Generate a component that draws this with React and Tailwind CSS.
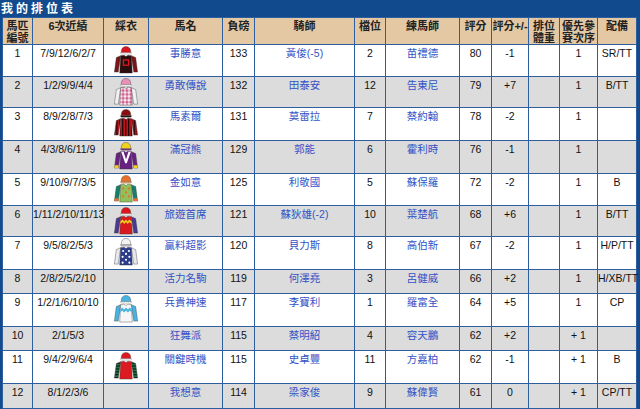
import React from 'react';

const rows = [
  { no: '1', form: '7/9/12/6/2/7', silk: 1, horse: '事勝意', wt: '133', jockey: '黃俊(-5)', draw: '2', trainer: '苗禮德', rating: '80', diff: '-1', prio: '1', gear: 'SR/TT', h: 'h-[32px]' },
  { no: '2', form: '1/2/9/9/4/4', silk: 2, horse: '勇敢傳說', wt: '132', jockey: '田泰安', draw: '12', trainer: '告東尼', rating: '79', diff: '+7', prio: '1', gear: 'B/TT', h: 'h-[31px]' },
  { no: '3', form: '8/9/2/8/7/3', silk: 3, horse: '馬素爾', wt: '131', jockey: '莫雷拉', draw: '7', trainer: '蔡約翰', rating: '78', diff: '-2', prio: '1', gear: '', h: 'h-[33px]' },
  { no: '4', form: '4/3/8/6/11/9', silk: 4, horse: '滿冠熊', wt: '129', jockey: '郭能', draw: '6', trainer: '霍利時', rating: '76', diff: '-1', prio: '1', gear: '', h: 'h-[33px]' },
  { no: '5', form: '9/10/9/7/3/5', silk: 5, horse: '金如意', wt: '125', jockey: '利敬國', draw: '5', trainer: '蘇保羅', rating: '72', diff: '-2', prio: '1', gear: 'B', h: 'h-[32px]' },
  { no: '6', form: '1/11/2/10/11/13', silk: 6, horse: '旅遊首席', wt: '121', jockey: '蘇狄雄(-2)', draw: '10', trainer: '葉楚航', rating: '68', diff: '+6', prio: '1', gear: 'B/TT', h: 'h-[31px]' },
  { no: '7', form: '9/5/8/2/5/3', silk: 7, horse: '贏料超影', wt: '120', jockey: '貝力斯', draw: '8', trainer: '高伯新', rating: '67', diff: '-2', prio: '1', gear: 'H/P/TT', h: 'h-[33px]' },
  { no: '8', form: '2/8/2/5/2/10', silk: 0, horse: '活力名駒', wt: '119', jockey: '何澤堯', draw: '3', trainer: '呂健威', rating: '66', diff: '+2', prio: '1', gear: 'H/XB/TT', h: 'h-[24px]' },
  { no: '9', form: '1/2/1/6/10/10', silk: 9, horse: '兵貴神速', wt: '117', jockey: '李寶利', draw: '1', trainer: '羅富全', rating: '64', diff: '+5', prio: '1', gear: 'CP', h: 'h-[33px]' },
  { no: '10', form: '2/1/5/3', silk: 0, horse: '狂舞派', wt: '115', jockey: '蔡明紹', draw: '4', trainer: '容天鵬', rating: '62', diff: '+2', prio: '+ 1', gear: '', h: 'h-[24px]' },
  { no: '11', form: '9/4/2/9/6/4', silk: 11, horse: '關鍵時機', wt: '115', jockey: '史卓豐', draw: '11', trainer: '方嘉柏', rating: '62', diff: '-1', prio: '+ 1', gear: 'B', h: 'h-[33px]' },
  { no: '12', form: '8/1/2/3/6', silk: 0, horse: '我想意', wt: '114', jockey: '梁家俊', draw: '9', trainer: '蘇偉賢', rating: '61', diff: '0', prio: '+ 1', gear: 'CP/TT', h: 'h-[25px]' },
];

const silks = {
  1: { cap: '#d9141c', capPeak: '#ffffff', body: '#2a0d0d', sleeve: '#7a1518', extra: 'square' },
  2: { cap: '#e890b8', capPeak: '#ffffff', body: 'url(#diaPink)', sleeve: '#f4f0f2', extra: '' },
  3: { cap: '#8a1010', capPeak: '#1a0505', body: 'url(#stripeRed)', sleeve: 'url(#stripeRed)', extra: '' },
  4: { cap: '#f2d21a', capPeak: '#7a2a8a', body: '#6a2282', sleeve: '#6a2282', cuff: '#f2d21a', extra: 'v' },
  5: { cap: '#e8702a', capPeak: '#f2a060', body: '#8fc05a', sleeve: '#17806a', cuff: '#e8702a', extra: 'dots' },
  6: { cap: '#e0151c', capPeak: '#ffffff', body: '#d81a20', sleeve: '#4a3a92', extra: 'zig' },
  7: { cap: '#f2f2f2', capPeak: '#c0c0c0', body: '#2c3c8c', sleeve: '#e8e8ee', extra: 'spots' },
  9: { cap: '#48b4e4', capPeak: '#ffffff', body: '#f6f6f6', sleeve: '#48b4e4', extra: 'band' },
  11: { cap: '#dc1a22', capPeak: '#ffffff', body: '#dc1a22', sleeve: 'url(#hoopGreen)', extra: '' },
};

function Silk({ id }) {
  const s = silks[id];
  if (!s) return null;
  return (
    <svg width="26" height="30" viewBox="0 0 26 31" className="mx-auto block">
      <defs>
        <pattern id="diaPink" width="4" height="4" patternUnits="userSpaceOnUse">
          <rect width="4" height="4" fill="#f6eef2" />
          <path d="M2 0 L4 2 L2 4 L0 2 Z" fill="#d0608e" />
        </pattern>
        <pattern id="stripeRed" width="3" height="4" patternUnits="userSpaceOnUse">
          <rect width="3" height="4" fill="#c8141c" />
          <rect width="1.3" height="4" fill="#1a0505" />
        </pattern>
        <pattern id="hoopGreen" width="4" height="3" patternUnits="userSpaceOnUse">
          <rect width="4" height="3" fill="#1f7a4a" />
          <rect width="4" height="1.2" fill="#111" />
        </pattern>
      </defs>
      {/* cap */}
      <path d="M8 8 Q8 1.5 13 1.5 Q18 1.5 18 8 Z" fill={s.cap} stroke="#333" strokeWidth="0.4" />
      <path d="M7 8 L19 8 L18 9.5 L8 9.5 Z" fill={s.capPeak} stroke="#666" strokeWidth="0.3" />
      {/* sleeves */}
      <path d="M7.5 11 L3 13 L1 28 L5 28 L6.5 18 Z" fill={s.sleeve} stroke="#333" strokeWidth="0.4" />
      <path d="M18.5 11 L23 13 L25 28 L21 28 L19.5 18 Z" fill={s.sleeve} stroke="#333" strokeWidth="0.4" />
      {s.cuff && (
        <>
          <path d="M1.3 25 L5.3 25 L5 28 L1 28 Z" fill={s.cuff} />
          <path d="M20.7 25 L24.7 25 L25 28 L21 28 Z" fill={s.cuff} />
        </>
      )}
      {/* body */}
      <path d="M7.5 11 L11 10.5 L13 12 L15 10.5 L18.5 11 L19.5 29 L6.5 29 Z" fill={s.body} stroke="#333" strokeWidth="0.4" />
      {s.extra === 'square' && <rect x="10.3" y="15.5" width="5.4" height="5.4" fill="#2a0d0d" stroke="#e01820" strokeWidth="1.3" />}
      {s.extra === 'v' && <path d="M8 11 L10.5 11 L13 19 L15.5 11 L18 11 L13.8 23 L12.2 23 Z" fill="#ffffff" />}
      {s.extra === 'dots' && (
        <g fill="#e8702a">
          <rect x="9" y="14" width="2" height="2" transform="rotate(45 10 15)" />
          <rect x="15" y="14" width="2" height="2" transform="rotate(45 16 15)" />
          <rect x="12" y="18" width="2" height="2" transform="rotate(45 13 19)" />
          <rect x="9" y="22" width="2" height="2" transform="rotate(45 10 23)" />
          <rect x="15" y="22" width="2" height="2" transform="rotate(45 16 23)" />
        </g>
      )}
      {s.extra === 'zig' && <path d="M7.2 16 L9.5 14 L11.3 16 L13 14 L14.7 16 L16.5 14 L18.8 16 L18.9 18.5 L16.5 16.5 L14.7 18.5 L13 16.5 L11.3 18.5 L9.5 16.5 L7.1 18.5 Z" fill="#f2d21a" />}
      {s.extra === 'spots' && (
        <g fill="#ffffff">
          <circle cx="10" cy="14.5" r="1.1" />
          <circle cx="16" cy="14.5" r="1.1" />
          <circle cx="13" cy="17.5" r="1.1" />
          <circle cx="9.5" cy="20.5" r="1.1" />
          <circle cx="16.5" cy="20.5" r="1.1" />
          <circle cx="13" cy="23.5" r="1.1" />
          <circle cx="9.5" cy="26.5" r="1.1" />
          <circle cx="16.5" cy="26.5" r="1.1" />
        </g>
      )}
      {s.extra === 'band' && <path d="M7.2 16 L9 14 L11 16 L13 14 L15 16 L17 14 L18.8 16 L18.9 19 L17 17 L15 19 L13 17 L11 19 L9 17 L7.1 19 Z" fill="#48b4e4" />}
    </svg>
  );
}

const cols = [30, 71, 45, 74, 32, 100, 31, 74, 32, 37, 31, 38, 39];

const th = 'border border-[#2d5f9f] bg-[#e4c8a4] align-top pt-[2px] font-bold text-[11px] leading-[12px] text-[#222]';
const base = 'border border-[#2d5f9f] align-top text-[10.5px] leading-[12px] text-center whitespace-nowrap';
const td = `${base} pt-[2px]`;
const silkTd = `${base} p-0`;

export default function App() {
  return (
    <div className="w-[640px] h-[409px] bg-[#114a8d] pl-[2px] pr-[4px] pb-[1px] overflow-hidden" style={{ fontFamily: '"Liberation Sans", Arial, "Noto Sans CJK TC", sans-serif' }}>
      <div className="h-[17px] flex items-center text-white font-bold text-[12px] tracking-[3px] -ml-[2px] pl-[1px]">我的排位表</div>
      <table className="table-fixed border-collapse w-[634px]">
        <colgroup>
          {cols.map((w, i) => (
            <col key={i} style={{ width: w }} />
          ))}
        </colgroup>
        <thead>
          <tr className="h-[26px] text-center">
            <th className={th}>馬匹<br />編號</th>
            <th className={th}>6次近績</th>
            <th className={th}>綵衣</th>
            <th className={th}>馬名</th>
            <th className={th}>負磅</th>
            <th className={th}>騎師</th>
            <th className={th}>檔位</th>
            <th className={th}>練馬師</th>
            <th className={th}>評分</th>
            <th className={`${th} whitespace-nowrap`}>評分+/-</th>
            <th className={th}>排位<br />體重</th>
            <th className={th}>優先參<br />賽次序</th>
            <th className={th}>配備</th>
          </tr>
        </thead>
        <tbody>
          {rows.map((r, i) => (
            <tr key={r.no} className={`${r.h} ${i % 2 === 0 ? 'bg-white' : 'bg-[#dcdcdc]'} text-[#111]`}>
              <td className={td}>{r.no}</td>
              <td className={td}>{r.form}</td>
              <td className={silkTd}>{r.silk ? <Silk id={r.silk} /> : null}</td>
              <td className={`${td} text-[#3352c6]`}>{r.horse}</td>
              <td className={td}>{r.wt}</td>
              <td className={`${td} text-[#3352c6]`}>{r.jockey}</td>
              <td className={td}>{r.draw}</td>
              <td className={`${td} text-[#3352c6]`}>{r.trainer}</td>
              <td className={td}>{r.rating}</td>
              <td className={td}>{r.diff}</td>
              <td className={td}></td>
              <td className={td}>{r.prio}</td>
              <td className={td}>{r.gear}</td>
            </tr>
          ))}
        </tbody>
      </table>
    </div>
  );
}
